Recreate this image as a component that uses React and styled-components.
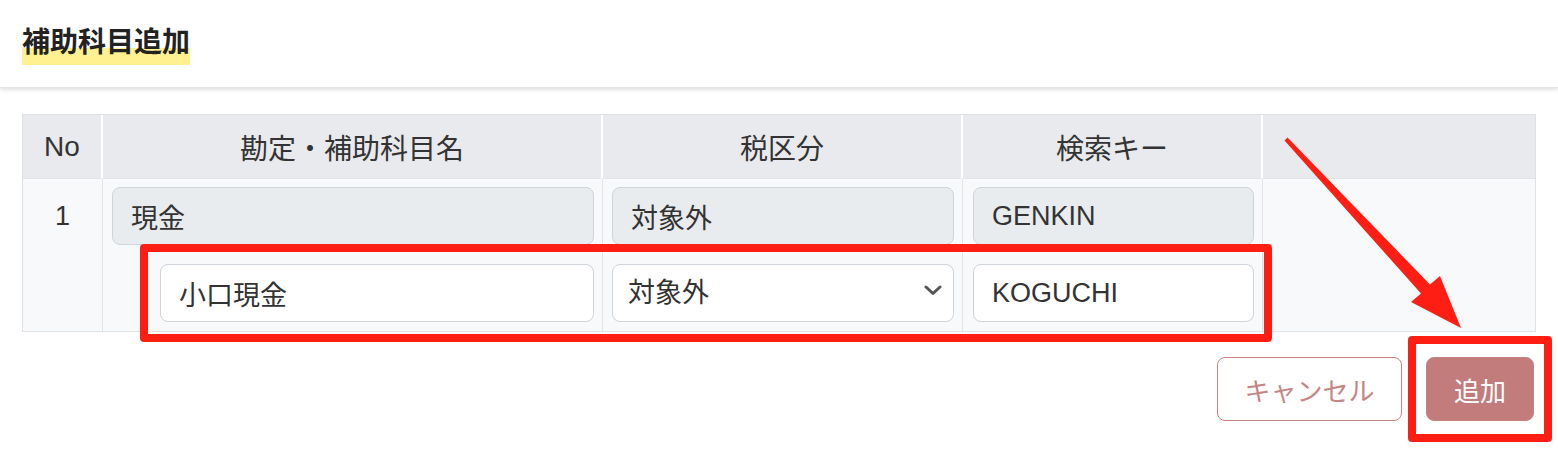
import React from "react";
import styled, { createGlobalStyle } from "styled-components";

const GlobalStyle = createGlobalStyle`
  * { box-sizing: border-box; }
  body {
    margin: 0;
    background: #fff;
    font-family: "Liberation Sans", "Noto Sans CJK JP", sans-serif;
    color: #333;
  }
`;

const Page = styled.div`
  position: relative;
  width: 1558px;
  height: 474px;
  overflow: hidden;
`;

const Header = styled.header`
  height: 88px;
  padding: 28px 0 0 22px;
  background: #fff;
  box-shadow: 0 2px 4px rgba(0, 0, 0, 0.12);
  border-bottom: 1px solid #e4e4e4;
`;

const Title = styled.h1`
  display: inline-block;
  margin: 0;
  height: 37px;
  line-height: 30px;
  font-size: 28px;
  font-weight: 700;
  color: #222;
  background: linear-gradient(transparent 20px, #fff18f 20px);
`;

const Main = styled.main`
  padding: 26px 24px 0 22px;
`;

const Table = styled.table`
  width: 1512px;
  border-collapse: separate;
  border-spacing: 0;
  border: 1.5px solid #dfe1e5;
  table-layout: fixed;
`;

const Th = styled.th`
  width: ${(p) => p.$w}px;
  height: 64px;
  background: #e9eaed;
  font-size: 28px;
  font-weight: 400;
  color: #333;
  text-align: center;
  border-bottom: 1px solid #e2e4e8;
  border-right: 2px solid #fff;
  &:last-child { border-right: none; }
`;

const Td = styled.td`
  height: 150px;
  padding: 8px 8px 9px ${(p) => p.$padLeft || 9}px;
  background: #f8f9fb;
  vertical-align: top;
  border-right: 1px solid #e2e4e8;
  &:last-child { border-right: none; }
`;

const NoCell = styled(Td)`
  padding: 8px 0 0 0;
  text-align: center;
  font-size: 27px;
  line-height: 58px;
`;

const Stack = styled.div`
  display: flex;
  flex-direction: column;
  gap: 19px;
`;

const Field = styled.input`
  display: block;
  width: calc(100% - ${(p) => p.$indent || 0}px);
  margin-left: ${(p) => p.$indent || 0}px;
  height: 58px;
  padding: 0 18px;
  font-family: inherit;
  font-size: 27px;
  color: #333;
  background: ${(p) => (p.readOnly ? "#e9ecef" : "#fff")};
  border: 1.5px solid #ced4da;
  border-radius: 8px;
  outline: none;
`;

const SelectWrap = styled.div`
  position: relative;
  height: 58px;
`;

const Select = styled.select`
  width: 100%;
  height: 58px;
  padding: 0 40px 0 15px;
  font-family: inherit;
  font-size: 27px;
  color: #333;
  background: #fff;
  border: 1.5px solid #ced4da;
  border-radius: 8px;
  appearance: none;
  outline: none;
`;

const Chevron = styled.svg`
  position: absolute;
  right: 12px;
  top: 20px;
  pointer-events: none;
`;

const Actions = styled.div`
  display: flex;
  justify-content: flex-end;
  gap: 24px;
  margin-top: 25px;
`;

const Button = styled.button`
  width: ${(p) => (p.$primary ? 108 : 185)}px;
  height: 64px;
  padding: 0;
  font-family: inherit;
  font-size: 26px;
  border-radius: 8px;
  border: 1.5px solid #c98181;
  color: ${(p) => (p.$primary ? "#fff" : "#c48585")};
  background: ${(p) => (p.$primary ? "#c27c7c" : "#fff")};
`;

const Callout = styled.div`
  position: absolute;
  left: ${(p) => p.$x}px;
  top: ${(p) => p.$y}px;
  width: ${(p) => p.$w}px;
  height: ${(p) => p.$h}px;
  border: 8px solid #ff1e14;
  border-radius: 4px;
  pointer-events: none;
`;

const Arrow = styled.svg`
  position: absolute;
  left: 0;
  top: 0;
  pointer-events: none;
`;

export default function App() {
  return (
    <Page>
      <GlobalStyle />
      <Header>
        <Title>補助科目追加</Title>
      </Header>
      <Main>
        <Table>
          <thead>
            <tr>
              <Th $w={80}>No</Th>
              <Th $w={500}>勘定・補助科目名</Th>
              <Th $w={360}>税区分</Th>
              <Th $w={300}>検索キー</Th>
              <Th $w={272}></Th>
            </tr>
          </thead>
          <tbody>
            <tr>
              <NoCell>1</NoCell>
              <Td>
                <Stack>
                  <Field readOnly value="現金" />
                  <Field $indent={48} defaultValue="小口現金" />
                </Stack>
              </Td>
              <Td>
                <Stack>
                  <Field readOnly value="対象外" />
                  <SelectWrap>
                    <Select defaultValue="対象外">
                      <option>対象外</option>
                      <option>課税</option>
                      <option>非課税</option>
                    </Select>
                    <Chevron width="18" height="12" viewBox="0 0 18 12">
                      <path d="M2 3 L9 9.5 L16 3" fill="none" stroke="#555" strokeWidth="3" strokeLinecap="round" strokeLinejoin="round" />
                    </Chevron>
                  </SelectWrap>
                </Stack>
              </Td>
              <Td $padLeft={10}>
                <Stack>
                  <Field readOnly value="GENKIN" />
                  <Field defaultValue="KOGUCHI" />
                </Stack>
              </Td>
              <Td></Td>
            </tr>
          </tbody>
        </Table>
        <Actions>
          <Button>キャンセル</Button>
          <Button $primary>追加</Button>
        </Actions>
      </Main>

      <Callout $x={140} $y={244} $w={1132} $h={98} />
      <Callout $x={1408} $y={336} $w={144} $h={106} />
      <Arrow width="1558" height="474" viewBox="0 0 1558 474">
        <polygon
          points="1287.5,137.5 1430,284.5 1440,276 1461,328 1411,302 1421,293.5 1284.5,140.5"
          fill="#ff1e14"
        />
      </Arrow>
    </Page>
  );
}
